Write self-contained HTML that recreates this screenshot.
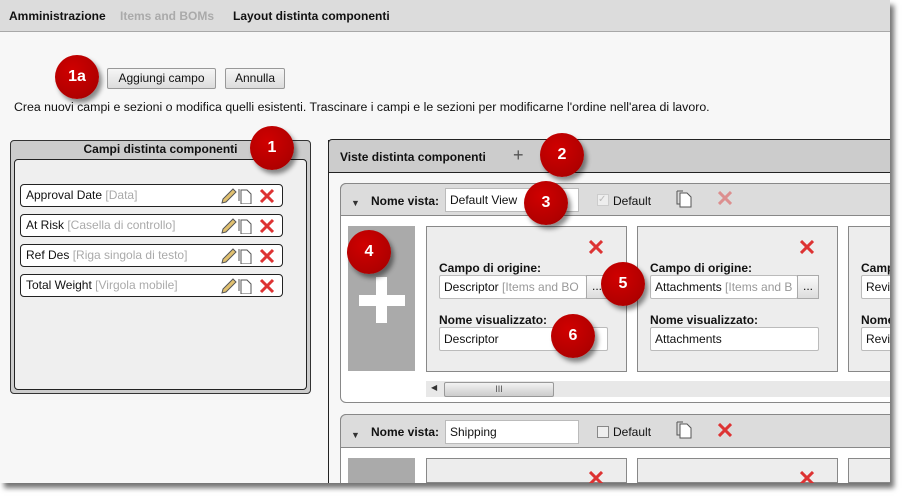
<!DOCTYPE html>
<html><head><meta charset="utf-8"><style>
*{box-sizing:border-box;margin:0;padding:0}
body{width:904px;height:497px;background:#fff;font-family:"Liberation Sans",Arial,sans-serif;font-size:12px;color:#111;position:relative;overflow:hidden}
.a{position:absolute}
#frame{left:0;top:0;width:890px;height:483px;background:#f7f7f7;box-shadow:4px 5px 5px rgba(0,0,0,.55);overflow:hidden}
.badge{position:absolute;width:44px;height:44px;border-radius:50%;background:radial-gradient(circle at 40% 35%,#d00000,#b00000 70%,#900000);color:#fff;font-weight:bold;font-size:16px;text-align:center;line-height:44px;box-shadow:3px 4px 5px rgba(0,0,0,.45);z-index:10}
.btn{position:absolute;height:21px;border:1px solid #999;border-radius:2px;background:linear-gradient(#f6f6f6,#dcdcdc);font-size:12px;text-align:center;line-height:19px}
.row{position:absolute;left:20px;width:263px;height:23px;border:1px solid #222;border-radius:4px;background:#fff;padding-left:5px;line-height:21px;font-size:12px}
.row i{font-style:normal;color:#aaa}
.row svg{position:absolute;right:3px;top:3px}
.card{position:absolute;top:226px;width:201px;height:146px;border:1px solid #888;background:#ededed}
.lbl{position:absolute;left:12px;font-weight:bold;font-size:12px}
.inp{position:absolute;left:12px;height:24px;border:1px solid #bbb;background:#fff;border-radius:2px;padding-left:4px;line-height:22px;font-size:12px;white-space:nowrap;overflow:hidden}
.vh{position:absolute;left:340px;width:560px;height:33px;background:#dcdcdc;border:1px solid #888;border-radius:6px 0 0 0}
</style></head><body>
<div id="frame" class="a">
 <div class="a" style="left:0;top:0;width:890px;height:32px;background:#dcdcdc;border-bottom:1px solid #a8a8a8"></div>
 <div class="a" style="left:9px;top:9px;font-weight:bold">Amministrazione</div>
 <div class="a" style="left:120px;top:9px;font-weight:bold;color:#aaa">Items and BOMs</div>
 <div class="a" style="left:233px;top:9px;font-weight:bold">Layout distinta componenti</div>

 <div class="btn" style="left:107px;top:68px;width:109px">Aggiungi campo</div>
 <div class="btn" style="left:225px;top:68px;width:60px">Annulla</div>
 <div class="a" style="left:14px;top:100px;font-size:12.35px;white-space:nowrap">Crea nuovi campi e sezioni o modifica quelli esistenti. Trascinare i campi e le sezioni per modificarne l'ordine nell'area di lavoro.</div>

 <div class="a" style="left:10px;top:140px;width:301px;height:254px;background:#ccc;border:1px solid #333;border-radius:4px"></div>
 <div class="a" style="left:10px;top:142px;width:301px;text-align:center;font-weight:bold">Campi distinta componenti</div>
 <div class="a" style="left:14px;top:159px;width:293px;height:231px;background:#efefef;border:1px solid #222;border-radius:4px"></div>
 <div class="row" style="top:184px">Approval Date <i>[Data]</i><svg width="60" height="16"><use href="#ic"/></svg></div>
 <div class="row" style="top:214px">At Risk <i>[Casella di controllo]</i><svg width="60" height="16"><use href="#ic"/></svg></div>
 <div class="row" style="top:244px">Ref Des <i>[Riga singola di testo]</i><svg width="60" height="16"><use href="#ic"/></svg></div>
 <div class="row" style="top:274px">Total Weight <i>[Virgola mobile]</i><svg width="60" height="16"><use href="#ic"/></svg></div>
 <svg width="0" height="0" style="position:absolute"><defs>
  <g id="ic">
   <path d="M3 15 L4 11 L14 1 L17 4 L7 14 Z" fill="#e0c070" stroke="#555" stroke-width="1"/>
   <path d="M22 2 h6 l4 4 v10 h-10 z" fill="#fff" stroke="#555"/><path d="M20 1 v12" stroke="#555"/>
   <path d="M42 2 L54 14 M54 2 L42 14" stroke="#d33" stroke-width="3"/>
  </g>
  <g id="cp"><path d="M4 3 h7 l4 4 v10 h-11 z" fill="#fff" stroke="#555"/><path d="M1 1 h6 M1 1 v13 h3" stroke="#555" fill="none"/></g>
  <g id="x"><path d="M1 1 L13 13 M13 1 L1 13" stroke="#d33" stroke-width="3"/></g>
 </defs></svg>

 <div class="a" style="left:328px;top:140px;width:570px;height:343px;border-left:1px solid #222"></div>
 <div class="a" style="left:328px;top:139px;width:570px;height:34px;background:#ccc;border:1px solid #222;border-radius:4px 0 0 0"></div>
 <div class="a" style="left:340px;top:150px;font-weight:bold">Viste distinta componenti</div>
 <div class="a" style="left:513px;top:146px;font-size:18px;color:#555;line-height:18px">+</div>

 <div class="a" style="left:340px;top:183px;width:560px;height:220px;background:#fff;border:1px solid #888;border-radius:6px"></div>
 <div class="vh" style="top:183px"></div>
 <div class="a" style="left:351px;top:198px;font-size:9px;color:#333">▼</div>
 <div class="a" style="left:371px;top:194px;font-weight:bold">Nome vista:</div>
 <div class="a" style="left:445px;top:188px;width:134px;height:24px;border:1px solid #bbb;background:#fff;padding-left:4px;line-height:22px">Default View</div>
 <div class="a" style="left:597px;top:194px;width:12px;height:12px;border:1px solid #ccc;background:#eee;font-size:10px;color:#bbb;line-height:10px">✓</div>
 <div class="a" style="left:613px;top:194px">Default</div>
 <svg class="a" style="left:676px;top:190px" width="18" height="18"><use href="#cp"/></svg>
 <svg class="a" style="left:718px;top:191px;opacity:.45" width="14" height="14"><use href="#x"/></svg>

 <div class="a" style="left:348px;top:226px;width:67px;height:145px;background:#aaa"></div>
 <div class="a" style="left:376px;top:277px;width:11px;height:46px;background:#fff"></div>
 <div class="a" style="left:359px;top:295px;width:46px;height:11px;background:#fff"></div>

 <div class="card" style="left:426px">
  <svg class="a" style="left:162px;top:13px" width="14" height="14"><use href="#x"/></svg>
  <div class="lbl" style="top:34px">Campo di origine:</div>
  <div class="inp" style="top:48px;width:148px">Descriptor <span style="color:#999">[Items and BO</span></div>
  <div class="a" style="left:159px;top:48px;width:22px;height:24px;border:1px solid #aaa;background:linear-gradient(#fafafa,#ddd);text-align:center;line-height:20px">...</div>
  <div class="lbl" style="top:86px">Nome visualizzato:</div>
  <div class="inp" style="top:100px;width:169px">Descriptor</div>
 </div>
 <div class="card" style="left:637px">
  <svg class="a" style="left:162px;top:13px" width="14" height="14"><use href="#x"/></svg>
  <div class="lbl" style="top:34px">Campo di origine:</div>
  <div class="inp" style="top:48px;width:148px">Attachments <span style="color:#999">[Items and B</span></div>
  <div class="a" style="left:159px;top:48px;width:22px;height:24px;border:1px solid #aaa;background:linear-gradient(#fafafa,#ddd);text-align:center;line-height:20px">...</div>
  <div class="lbl" style="top:86px">Nome visualizzato:</div>
  <div class="inp" style="top:100px;width:169px">Attachments</div>
 </div>
 <div class="card" style="left:848px">
  <div class="lbl" style="top:34px">Campo di origine:</div>
  <div class="inp" style="top:48px;width:166px">Revision</div>
  <div class="lbl" style="top:86px">Nome visualizzato:</div>
  <div class="inp" style="top:100px;width:166px">Revision</div>
 </div>
 <div class="a" style="left:426px;top:381px;width:470px;height:16px;background:#e8e8e8"></div>
 <div class="a" style="left:431px;top:383px;font-size:8px;color:#333">◀</div>
 <div class="a" style="left:444px;top:382px;width:110px;height:15px;border:1px solid #999;border-radius:2px;background:linear-gradient(#f2f2f2,#ccc);text-align:center;font-size:9px;line-height:12px;color:#555">III</div>

 <div class="a" style="left:340px;top:414px;width:560px;height:69px;background:#fff;border:1px solid #888;border-bottom:none;border-radius:6px 0 0 0"></div>
 <div class="vh" style="top:414px;height:34px"></div>
 <div class="a" style="left:351px;top:430px;font-size:9px;color:#333">▼</div>
 <div class="a" style="left:371px;top:425px;font-weight:bold">Nome vista:</div>
 <div class="a" style="left:445px;top:420px;width:134px;height:24px;border:1px solid #bbb;background:#fff;padding-left:4px;line-height:22px">Shipping</div>
 <div class="a" style="left:597px;top:426px;width:12px;height:12px;border:1px solid #888;background:#eee"></div>
 <div class="a" style="left:613px;top:425px">Default</div>
 <svg class="a" style="left:676px;top:421px" width="18" height="18"><use href="#cp"/></svg>
 <svg class="a" style="left:718px;top:423px" width="14" height="14"><use href="#x"/></svg>
 <div class="a" style="left:348px;top:458px;width:67px;height:25px;background:#aaa"></div>
 <div class="card" style="left:426px;top:458px;height:25px"><svg class="a" style="left:162px;top:12px" width="14" height="14"><use href="#x"/></svg></div>
 <div class="card" style="left:637px;top:458px;height:25px"><svg class="a" style="left:162px;top:12px" width="14" height="14"><use href="#x"/></svg></div>
 <div class="card" style="left:848px;top:458px;height:25px"></div>
</div>

<div class="badge" style="left:55px;top:55px">1a</div>
<div class="badge" style="left:250px;top:126px">1</div>
<div class="badge" style="left:540px;top:133px">2</div>
<div class="badge" style="left:524px;top:181px">3</div>
<div class="badge" style="left:347px;top:230px">4</div>
<div class="badge" style="left:601px;top:262px">5</div>
<div class="badge" style="left:551px;top:314px">6</div>
</body></html>
